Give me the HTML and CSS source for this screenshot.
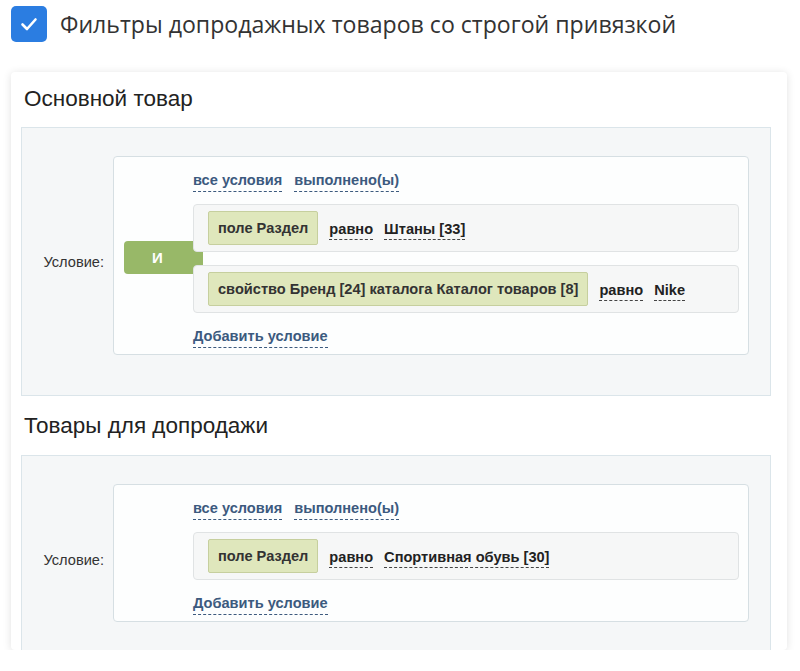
FILE: index.html
```html
<!DOCTYPE html>
<html lang="ru">
<head>
    <meta charset="UTF-8">
    <meta name="viewport" content="width=device-width, initial-scale=1.0">
    <title>Фильтры допродажных товаров</title>
    <link rel="stylesheet" href="styles.css">
</head>
<body>
    <label class="option">
        <span class="checkbox">
            <svg width="22" height="22" viewBox="0 0 22 22"><path d="M4.5 11.5l4.5 4.5 8.5-9.5" fill="none" stroke="#fff" stroke-width="2.6" stroke-linecap="round" stroke-linejoin="round"/></svg>
        </span>
        <span class="option-title">Фильтры допродажных товаров со строгой привязкой</span>
    </label>

    <div class="card">
        <h2 class="section-title">Основной товар</h2>
        <div class="panel">
            <div class="cond-label">Условие:</div>
            <div class="cond-box">
                <div class="cond-head">
                    <span class="link">все условия</span>
                    <span class="link">выполнено(ы)</span>
                </div>
                <div class="cond-rows">
                    <!-- логическая связка между строками -->
                    <div class="joint">И</div>
                    <div class="cond-row">
                        <span class="chip">поле Раздел</span>
                        <span class="value">равно</span>
                        <span class="value">Штаны [33]</span>
                    </div>
                    <div class="cond-row">
                        <span class="chip">свойство Бренд [24] каталога Каталог товаров [8]</span>
                        <span class="value">равно</span>
                        <span class="value">Nike</span>
                    </div>
                </div>
                <span class="link add">Добавить условие</span>
            </div>
        </div>

        <h2 class="section-title">Товары для допродажи</h2>
        <div class="panel panel-last">
            <div class="cond-label">Условие:</div>
            <div class="cond-box">
                <div class="cond-head">
                    <span class="link">все условия</span>
                    <span class="link">выполнено(ы)</span>
                </div>
                <div class="cond-rows">
                    <div class="cond-row">
                        <span class="chip">поле Раздел</span>
                        <span class="value">равно</span>
                        <span class="value">Спортивная обувь [30]</span>
                    </div>
                </div>
                <span class="link add">Добавить условие</span>
            </div>
        </div>
    </div>
</body>
</html>
```

FILE: styles.css
```css
body {
    margin: 0;
    padding: 6px 13px 0 11px;
    background: #fff;
    font-family: "Liberation Sans", Arial, sans-serif;
    color: #333;
}
.option {
    display: flex;
    align-items: center;
    gap: 13px;
    height: 36px;
}
.checkbox {
    width: 36px;
    height: 36px;
    border-radius: 5px;
    background: #2b7de1;
    display: flex;
    align-items: center;
    justify-content: center;
}
.option-title {
    font-family: "Open Sans", "Noto Sans", sans-serif;
    font-size: 23.1px;
    color: #333;
}
.card {
    margin-top: 30px;
    height: 578px;
    overflow: hidden;
    background: #fff;
    border-radius: 4px;
    box-shadow: 0 1px 8px rgba(0, 0, 0, 0.12);
    padding: 0 16px 0 10px;
}
.section-title {
    margin: 0;
    padding: 14px 0 0 3px;
    height: 41px;
    font-size: 22.5px;
    font-weight: normal;
    color: #222;
}
.panel {
    display: flex;
    align-items: center;
    background: #f5f7f8;
    border: 1px solid #dbe5ea;
    padding: 28px 21px 40px 0;
}
.panel + .section-title {
    padding-top: 17px;
    height: 42px;
}
.cond-label {
    width: 82px;
    text-align: right;
    font-size: 14.6px;
    padding: 13px 9px 0 0;
    flex-shrink: 0;
}
.cond-box {
    flex: 1;
    background: #fdfefe;
    border: 1px solid #d6dfe3;
    border-radius: 4px;
    padding: 13px 9px 6px 79px;
}
.cond-head {
    display: flex;
    gap: 12px;
    height: 24px;
}
.link {
    font-size: 14.6px;
    font-weight: bold;
    color: #3c5a7e;
    border-bottom: 1px dashed #3c5a7e;
    line-height: 21px;
    align-self: flex-start;
}
.cond-rows {
    position: relative;
    display: flex;
    flex-direction: column;
    gap: 13px;
    margin: 10px 0 13px;
}
.joint {
    position: absolute;
    left: -69px;
    top: 37px;
    width: 79px;
    height: 33px;
    background: #98b868;
    border-radius: 4px;
    color: #fff;
    font-weight: bold;
    font-size: 15px;
    line-height: 33px;
    text-indent: -12px;
    text-align: center;
}
.cond-row {
    position: relative;
    display: flex;
    align-items: center;
    gap: 11px;
    height: 46px;
    padding-left: 14px;
    background: #f6f7f7;
    border: 1px solid #e0e3e4;
    border-radius: 4px;
}
.chip {
    background: #dfe7bc;
    border: 1px solid #c6cf9e;
    border-radius: 2px;
    padding: 0 9px;
    line-height: 32px;
    font-size: 14.6px;
    font-weight: bold;
    color: #333;
}
.value {
    font-size: 14.6px;
    font-weight: bold;
    color: #222;
    line-height: 19px;
    border-bottom: 1px dashed #444;
    margin-top: 3px;
}
.value:first-of-type {
    margin-left: 1px;
}
.add {
    display: inline-block;
}
```
